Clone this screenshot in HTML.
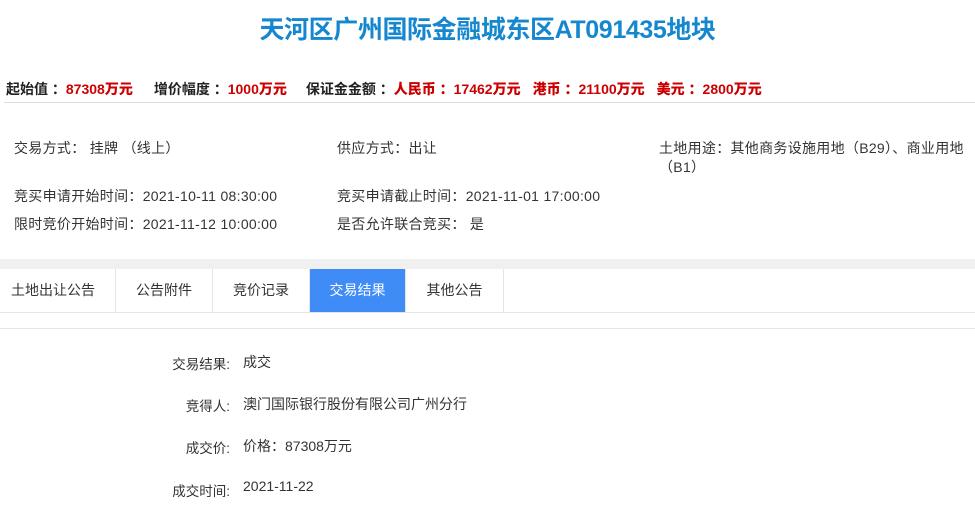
<!DOCTYPE html>
<html><head><meta charset="utf-8"><style>
body{margin:0;width:975px;height:509px;background:#fff;font-family:"Liberation Sans","Noto Sans CJK SC",sans-serif;position:relative;overflow:hidden;color:#333}
.a{position:absolute;white-space:nowrap}
h1{position:absolute;left:0;width:975px;top:12px;margin:0;text-align:center;font-size:25px;letter-spacing:-0.4px;font-weight:bold;color:#1587cf;line-height:36px}
.info{left:6px;top:79px;font-size:14px;font-weight:bold;color:#222;line-height:20px}
.info b{color:#c00}
.g{display:inline-block}
.r{font-size:14px;line-height:20px;color:#333;letter-spacing:0.3px}
.tab{position:absolute;top:269px;height:43px;line-height:43px;text-align:center;font-size:14px;color:#333;border-right:1px solid #e2e5ea;box-sizing:border-box}
.lab{position:absolute;width:230px;text-align:right;left:0;font-size:13.5px;color:#333}
.val{position:absolute;left:243px;font-size:14px;color:#333}
</style></head><body>
<h1>天河区广州国际金融城东区AT091435地块</h1>
<div class="a info">起始值 ：<b>87308万元</b><span class="g" style="width:21px"></span>增价幅度 ：<b>1000万元</b><span class="g" style="width:19px"></span>保证金金额 ：<b>人民币 ：17462万元<span class="g" style="width:12px"></span>港币 ：21100万元<span class="g" style="width:12px"></span>美元 ：2800万元</b></div>
<div class="a" style="left:4px;top:102px;width:971px;height:1px;background:#ddd"></div>
<div class="a r" style="left:14px;top:138px">交易方式： 挂牌 （线上）</div>
<div class="a r" style="left:337px;top:138px">供应方式：出让</div>
<div class="a r" style="left:659px;top:138px">土地用途：其他商务设施用地（B29）、商业用地</div>
<div class="a r" style="left:659px;top:157px">（B1）</div>
<div class="a r" style="left:14px;top:186px">竞买申请开始时间：2021-10-11 08:30:00</div>
<div class="a r" style="left:337px;top:186px">竞买申请截止时间：2021-11-01 17:00:00</div>
<div class="a r" style="left:14px;top:214px">限时竞价开始时间：2021-11-12 10:00:00</div>
<div class="a r" style="left:337px;top:214px">是否允许联合竞买： 是</div>
<div class="a" style="left:0;top:259px;width:975px;height:10px;background:#f0f0f0"></div>
<div class="a" style="left:0;top:312px;width:975px;height:1px;background:#e2e5ea"></div>
<div class="tab" style="left:0;width:116px;text-align:left;padding-left:11px">土地出让公告</div>
<div class="tab" style="left:116px;width:97px">公告附件</div>
<div class="tab" style="left:213px;width:97px">竞价记录</div>
<div class="tab" style="left:310px;width:96px;background:#3f8cf7;color:#fff">交易结果</div>
<div class="tab" style="left:406px;width:98px">其他公告</div>
<div class="a" style="left:0;top:328px;width:975px;height:1px;background:#e5e5e5"></div>
<div class="lab" style="top:353px">交易结果:</div><div class="val" style="top:352px">成交</div>
<div class="lab" style="top:395px">竞得人:</div><div class="val" style="top:394px">澳门国际银行股份有限公司广州分行</div>
<div class="lab" style="top:437px">成交价:</div><div class="val" style="top:436px">价格：87308万元</div>
<div class="lab" style="top:480px">成交时间:</div><div class="val" style="top:478px">2021-11-22</div>
</body></html>
